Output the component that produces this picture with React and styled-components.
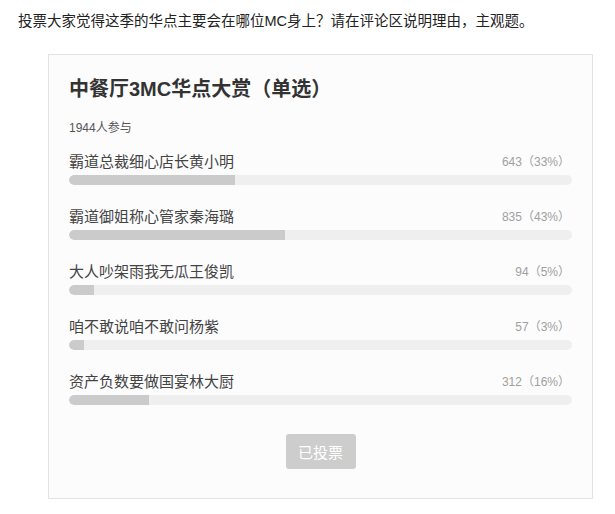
import React from "react";
import styled, { createGlobalStyle } from "styled-components";

const GlobalStyle = createGlobalStyle`
  body {
    margin: 0;
    background: #ffffff;
    font-family: "Liberation Sans", "Noto Sans CJK SC", sans-serif;
  }
`;

// Data
const total = 1944;
const options = [
  { name: "霸道总裁细心店长黄小明", votes: 643, pct: 33 },
  { name: "霸道御姐称心管家秦海璐", votes: 835, pct: 43 },
  { name: "大人吵架雨我无瓜王俊凯", votes: 94, pct: 5 },
  { name: "咱不敢说咱不敢问杨紫", votes: 57, pct: 3 },
  { name: "资产负数要做国宴林大厨", votes: 312, pct: 16 },
];

const App = () => {
  return (
    <>
      <GlobalStyle />
      <Page>
        <Intro>
          投票大家觉得这季的华点主要会在哪位MC身上？请在评论区说明理由，主观题。
        </Intro>
        <Card>
          <Title>中餐厅3MC华点大赏（单选）</Title>
          <Count>{total}人参与</Count>
          <List>
            {options.map((opt) => (
              <Option key={opt.name}>
                <Head>
                  <Label>{opt.name}</Label>
                  <Result>
                    {opt.votes}（{opt.pct}%）
                  </Result>
                </Head>
                <Track>
                  <Fill style={{ width: `${opt.pct}%` }} />
                </Track>
              </Option>
            ))}
          </List>
          <Footer>
            <VotedButton disabled>已投票</VotedButton>
          </Footer>
        </Card>
      </Page>
    </>
  );
};

const Page = styled.div`
  padding: 10px 0 0 18px;
`;

const Intro = styled.p`
  margin: 0;
  font-size: 14.5px;
  line-height: 22px;
  color: #222;
`;

const Card = styled.div`
  box-sizing: border-box;
  width: 545px;
  margin: 22px 0 0 30px;
  padding: 20px 20px 29px;
  border: 1px solid #e3e3e3;
  background: #fcfcfd;
`;

const Title = styled.h2`
  margin: 0;
  font-size: 20px;
  font-weight: bold;
  line-height: 28px;
  color: #333;
`;

const Count = styled.div`
  margin-top: 15px;
  font-size: 12px;
  line-height: 20px;
  color: #555;
`;

const List = styled.div`
  display: flex;
  flex-direction: column;
  gap: 20px;
  margin-top: 12px;
`;

const Option = styled.div`
  display: flex;
  flex-direction: column;
  gap: 5px;
`;

const Head = styled.div`
  display: flex;
  justify-content: space-between;
  align-items: center;
  height: 20px;
`;

const Label = styled.span`
  font-size: 15px;
  color: #444;
`;

const Result = styled.span`
  font-size: 12px;
  color: #a0a0a0;
  padding-right: 2px;
`;

const Track = styled.div`
  height: 10px;
  border-radius: 5px;
  background: #efefef;
  overflow: hidden;
`;

const Fill = styled.div`
  height: 100%;
  background: #cbcbcb;
  border-radius: 5px 0 0 5px;
`;

const Footer = styled.div`
  display: flex;
  justify-content: center;
  margin-top: 29px;
`;

const VotedButton = styled.button`
  width: 70px;
  height: 35px;
  border: none;
  border-radius: 3px;
  background: #cdcdcd;
  color: #fff;
  font-family: inherit;
  font-size: 15px;
  padding: 0;
`;

export default App;
